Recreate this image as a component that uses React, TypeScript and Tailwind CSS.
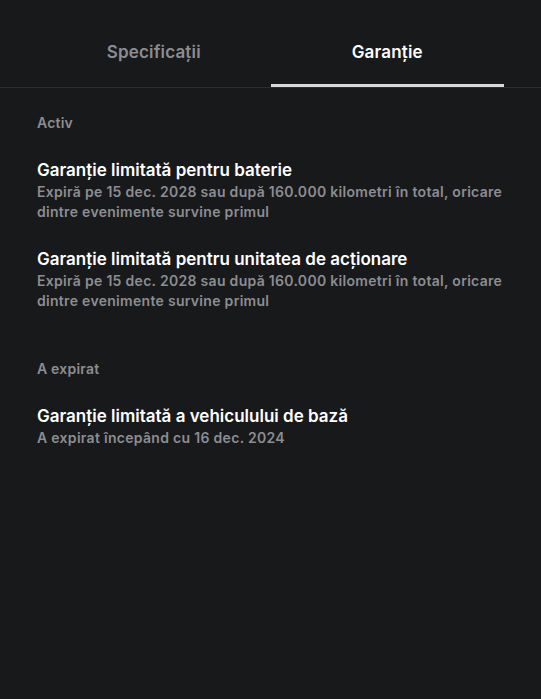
import { useState } from 'react';

const sections = [
  {
    label: 'Activ',
    items: [
      {
        title: 'Garanție limitată pentru baterie',
        detail: 'Expiră pe 15 dec. 2028 sau după 160.000 kilometri în total, oricare dintre evenimente survine primul',
      },
      {
        title: 'Garanție limitată pentru unitatea de acționare',
        detail: 'Expiră pe 15 dec. 2028 sau după 160.000 kilometri în total, oricare dintre evenimente survine primul',
      },
    ],
  },
  {
    label: 'A expirat',
    items: [
      {
        title: 'Garanție limitată a vehiculului de bază',
        detail: 'A expirat începând cu 16 dec. 2024',
      },
    ],
  },
];

const tabs = ['Specificații', 'Garanție'];

export default function App() {
  const [active, setActive] = useState(1);

  return (
    <div className="min-h-screen bg-[#18191b] text-white" style={{ fontFamily: 'Inter, "Noto Sans", sans-serif' }}>
      {/* Tabs */}
      <div className="h-[88px] border-b border-[#2c2d30] px-[37px] flex">
        {tabs.map((t, i) => (
          <button
            key={t}
            onClick={() => setActive(i)}
            className="flex-1 flex flex-col items-center"
          >
            <span
              className={`pt-[40px] leading-[24px] text-[17px] font-semibold tracking-[0.01em] ${
                i === active ? 'text-white' : 'text-[#8c8d90]'
              }`}
            >
              {t}
            </span>
            <div className="flex-1" />
            <div className={`h-[3px] w-full ${i === active ? 'bg-[#d9d9db]' : 'bg-transparent'}`} />
          </button>
        ))}
      </div>

      {/* Warranty list */}
      <div className="pl-[37px] pr-[34px] pt-[25px]">
        {sections.map((s, si) => (
          <div key={s.label} className={si > 0 ? 'mt-[48px]' : ''}>
            <div className="text-[14px] leading-[20px] font-semibold text-[#8c8d90] tracking-[0.2px]">{s.label}</div>
            <div className="mt-[25px] flex flex-col gap-[25px]">
              {s.items.map((it) => (
                <div key={it.title}>
                  <div className="text-[17px] leading-[24px] font-semibold text-white">{it.title}</div>
                  <div className="text-[14px] leading-[20px] font-semibold text-[#8c8d90] tracking-[0.3px]">
                    {it.detail}
                  </div>
                </div>
              ))}
            </div>
          </div>
        ))}
      </div>
    </div>
  );
}
